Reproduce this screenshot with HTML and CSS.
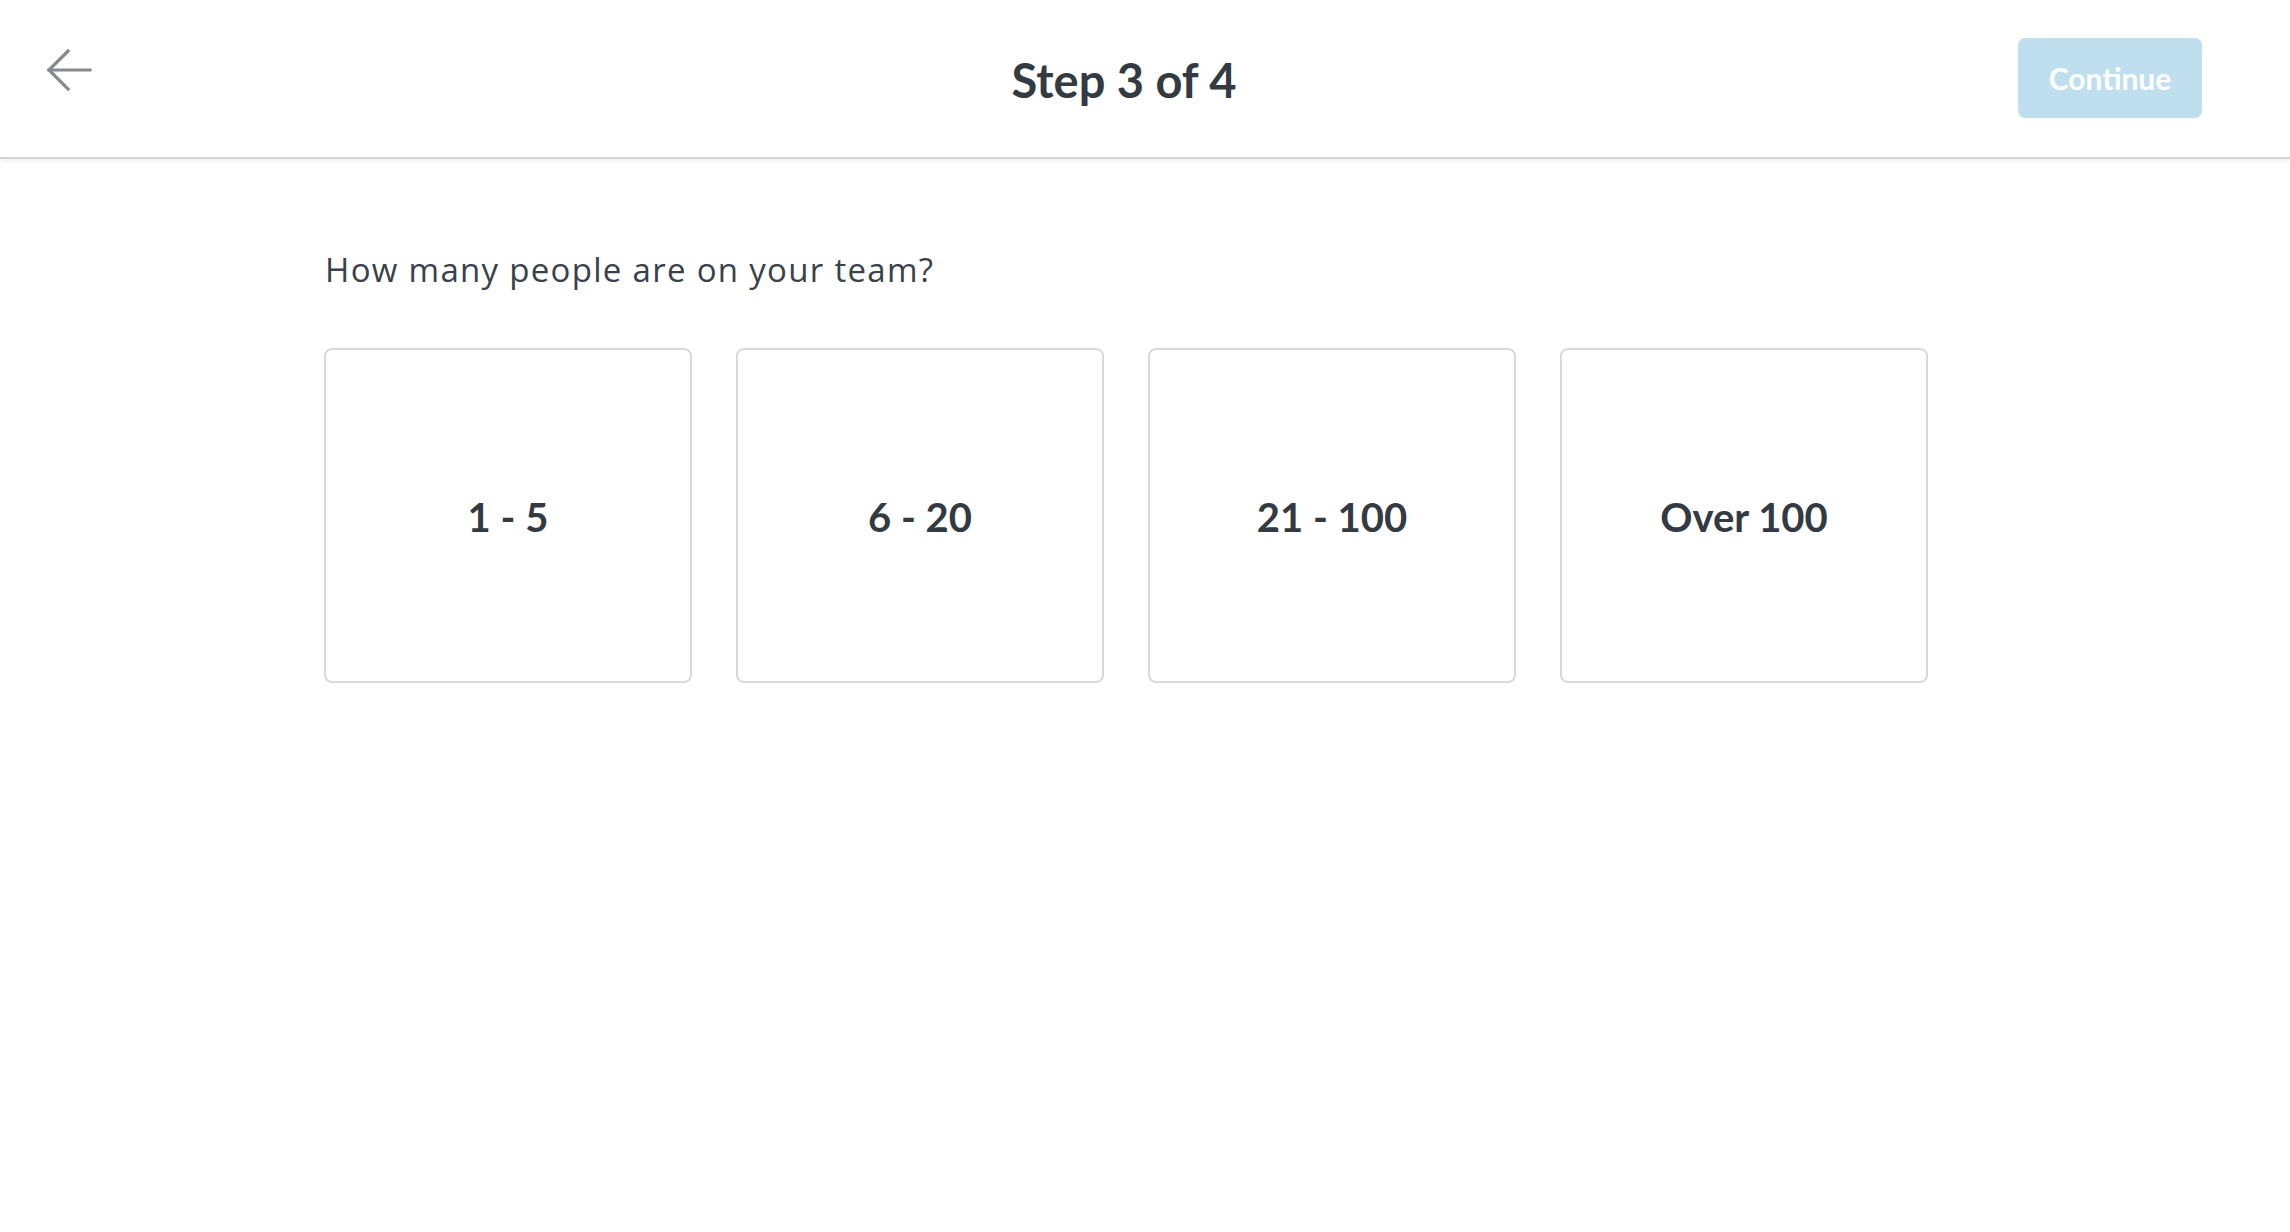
FILE: index.html
```html
<!DOCTYPE html>
<html lang="en">
<head>
<meta charset="utf-8">
<title>Step 3 of 4</title>
<link rel="stylesheet" href="styles.css">
</head>
<body>
<header class="topbar">
  <button class="back" aria-label="Back">
    <svg width="46" height="44" viewBox="0 0 46 44" fill="none" stroke="#858a8f" stroke-width="3.2" stroke-linecap="square">
      <path d="M3 22H44"/>
      <path d="M22 3L3 22L22 41"/>
    </svg>
  </button>
  <h1 class="title">Step 3 of 4</h1>
  <button class="continue">Continue</button>
</header>
<main class="content">
  <p class="question">How many people are on your team?</p>
  <div class="options">
    <div class="option">1 - 5</div>
    <div class="option">6 - 20</div>
    <div class="option">21 - 100</div>
    <div class="option">Over 100</div>
  </div>
</main>
</body>
</html>
```
FILE: styles.css
```css
html, body {
  margin: 0;
  padding: 0;
  background: #ffffff;
}
body {
  font-family: Lato, "Open Sans", "Liberation Sans", sans-serif;
  color: #333a42;
}
.topbar {
  height: 157px;
  border-bottom: 2px solid #d3d3d3;
  box-shadow: 0 2px 4px rgba(0,0,0,0.07);
  display: flex;
  align-items: flex-start;
  justify-content: space-between;
  box-sizing: content-box;
  padding: 0 88px 0 46px;
  position: relative;
}
.back {
  background: none;
  border: 0;
  padding: 0;
  margin-top: 48px;
  width: 46px;
  height: 44px;
  display: block;
}
.back svg { display: block; }
.title {
  margin: 0;
  margin-top: 51px;
  font-size: 47px;
  font-weight: 700;
  line-height: 58px;
  color: #333a42;
  position: absolute;
  left: 0;
  right: 42px;
  text-align: center;
  pointer-events: none;
}
.continue {
  margin-top: 38px;
  width: 184px;
  height: 80px;
  border: 0;
  border-radius: 7px;
  background: #c0dfee;
  color: #ffffff;
  font-family: Lato, "Open Sans", "Liberation Sans", sans-serif;
  font-size: 30px;
  font-weight: 700;
  padding: 0;
}
.content {
  padding: 0 0 0 324px;
}
.question {
  margin: 91px 0 0 1px;
  font-family: "Open Sans", Lato, "Liberation Sans", sans-serif;
  font-size: 33px;
  line-height: 40px;
  letter-spacing: 1.3px;
  font-weight: 400;
  color: #39414a;
}
.options {
  display: flex;
  gap: 44px;
  margin-top: 58px;
}
.option {
  width: 368px;
  height: 335px;
  box-sizing: border-box;
  border: 2px solid #d9d9d9;
  border-radius: 8px;
  display: flex;
  align-items: center;
  justify-content: center;
  padding-top: 2px;
  font-size: 40px;
  font-weight: 700;
  color: #333a42;
}
```
